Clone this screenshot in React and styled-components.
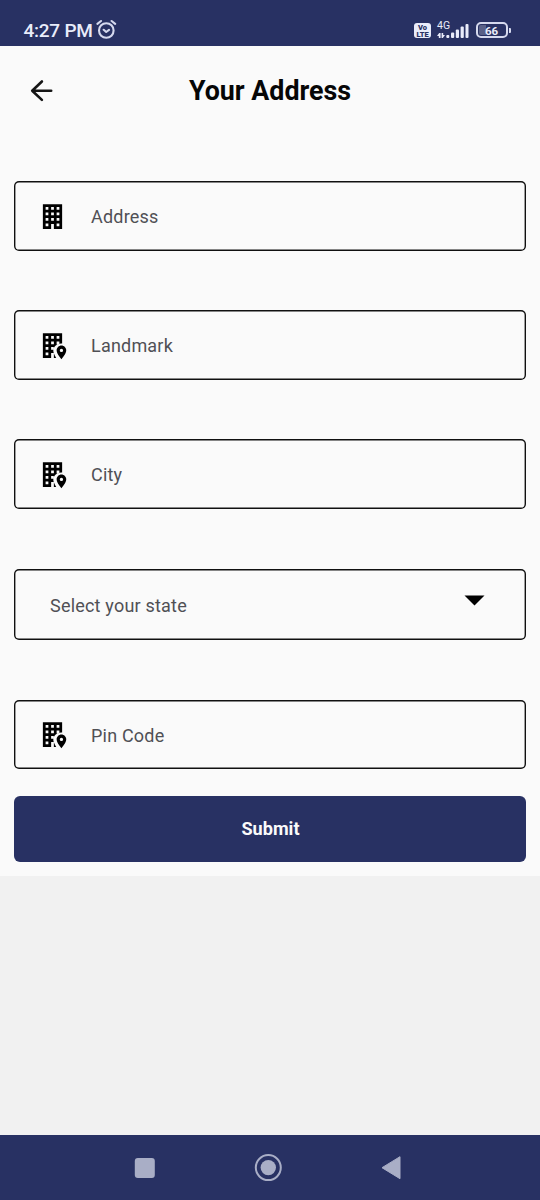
import React from "react";
import styled, { createGlobalStyle } from "styled-components";

const NAVY = "#283163";

const GlobalStyle = createGlobalStyle`
  * { box-sizing: border-box; }
  body { margin: 0; background: #f1f1f1; font-family: Roboto, "Liberation Sans", sans-serif; }
  svg { display: block; flex: none; }
`;

const Screen = styled.div`
  display: flex;
  flex-direction: column;
  width: 540px;
  height: 1200px;
  background: #f1f1f1;
`;

const StatusBar = styled.header`
  display: flex;
  justify-content: space-between;
  height: 46px;
  padding: 0 29.5px 0 23.5px;
  background: ${NAVY};
  color: #e9ecfa;
`;

const Clock = styled.div`
  display: flex;
  gap: 3px;
  padding-top: 19px;
  font-size: 19px;
  font-weight: 500;
  line-height: 24px;
  white-space: nowrap;
`;

const ClockText = styled.span`
  width: 69px;
  letter-spacing: -0.25px;
`;

const StatusIcons = styled.div`
  display: flex;
  padding-top: 19px;
`;

const VolteBadge = styled.div`
  display: flex;
  flex-direction: column;
  align-items: center;
  justify-content: center;
  width: 17px;
  height: 15px;
  margin: 4px 5.5px 0 0;
  border-radius: 3px;
  background: #e9ecfa;
  color: ${NAVY};
  font-size: 7.5px;
  font-weight: 900;
  line-height: 7px;
`;

const BadgeLine = styled.span`
  height: 7px;
`;

const Signal = styled.div`
  width: 33px;
  margin-right: 6px;
`;

const Network = styled.div`
  padding-left: 0.5px;
  font-size: 10.5px;
  line-height: 13px;
  height: 5px;
`;

const Battery = styled.div`
  display: flex;
  align-items: center;
  height: 16px;
  margin-top: 3px;
`;

const BatteryBody = styled.div`
  width: 32px;
  height: 16px;
  border: 2px solid #d5d9ee;
  border-radius: 5px;
  background: linear-gradient(90deg, #596087 0 7px, ${NAVY} 7px);
  background-origin: content-box;
  background-clip: content-box;
  padding: 1px;
  font-size: 11.5px;
  font-weight: 700;
  line-height: 12px;
  text-align: center;
`;

const BatteryTip = styled.div`
  width: 2px;
  height: 5px;
  margin-left: 1px;
  border-radius: 0 1px 1px 0;
  background: #d5d9ee;
`;

const Page = styled.main`
  height: 830px;
  padding: 0 14px;
  background: #fafafa;
`;

const TitleBar = styled.div`
  display: grid;
  grid-template-columns: 60px 1fr 60px;
  align-items: center;
  height: 90px;
  margin-bottom: 45px;
`;

const BackButton = styled.button`
  padding: 0 0 0 15px;
  border: 0;
  background: none;
`;

const Title = styled.h1`
  margin: 0;
  color: #060606;
  font-size: 26.8px;
  font-weight: 700;
  line-height: 32px;
  text-align: center;
  white-space: nowrap;
`;

const Form = styled.form`
  display: flex;
  flex-direction: column;
`;

const Field = styled.label`
  display: flex;
  align-items: center;
  height: ${(p) => p.$height || 70}px;
  margin-bottom: ${(p) => p.$gap || 59}px;
  padding: ${(p) => p.$padding || "0 22px"};
  border-radius: 5px;
  box-shadow: inset 0 0 0 1.4px #101010;
`;

const Placeholder = styled.span`
  flex: 1;
  padding-top: ${(p) => p.$drop || 2}px;
  color: #505055;
  font-size: 18px;
  line-height: 24px;
  letter-spacing: 0.2px;
`;

const FieldIcon = styled.svg`
  width: 33px;
  height: 33px;
  margin-right: 22px;
`;

const SubmitButton = styled.button`
  height: 66px;
  padding: 0 0 0 1px;
  border: 0;
  border-radius: 6px;
  background: ${NAVY};
  color: #fafafa;
  font: 700 18.1px/24px Roboto, sans-serif;
`;

const NavBar = styled.nav`
  display: flex;
  align-items: center;
  justify-content: space-between;
  height: 65px;
  margin-top: auto;
  padding: 0 139px 0 134px;
  background: ${NAVY};
`;

function BuildingIcon() {
  return (
    <FieldIcon viewBox="0 0 24 24">
      <path
        fillRule="evenodd"
        d="M5 3V21H11V17.5H13V21H19V3H5M7 5H9V7H7V5M11 5H13V7H11V5M15 5H17V7H15V5M7 9H9V11H7V9M11 9H13V11H11V9M15 9H17V11H15V9M7 13H9V15H7V13M11 13H13V15H11V13M15 13H17V15H15V13M7 17H9V19H7V17M15 17H17V19H15V17Z"
      />
    </FieldIcon>
  );
}

function BuildingMarkerIcon() {
  return (
    <FieldIcon viewBox="0 0 24 24">
      <path
        fillRule="evenodd"
        d="M5 3V21H11V17.5H12.9C13.3 18.8 14 20 14.7 21H13V17.5H12.9C12.7 16.9 12.6 16.2 12.6 15.6C12.6 12.6 15.4 10.5 18.3 10.5L19 10.6V3H5M7 5H9V7H7V5M11 5H13V7H11V5M15 5H17V7H15V5M7 9H9V11H7V9M11 9H13V11H11V9M15 9H17V10.8L15.6 11.3H15V9M7 13H9V15H7V13M11 13H13V13.3L12.6 15H11V13M7 17H9V19H7V17Z"
      />
      <path
        fillRule="evenodd"
        d="M18.5 12C16.6 12 15 13.6 15 15.5C15 18.1 18.5 22 18.5 22S22 18.1 22 15.5C22 13.6 20.4 12 18.5 12M18.5 16.8A1.2 1.2 0 1 1 18.5 14.4A1.2 1.2 0 0 1 18.5 16.8Z"
      />
    </FieldIcon>
  );
}

export default function App() {
  return (
    <Screen>
      <GlobalStyle />
      <StatusBar>
        <Clock>
          <ClockText>4:27 PM</ClockText>
          <svg width="21" height="21" viewBox="0 0 21 21" fill="none" stroke="#d5d9ee" strokeWidth="2.1" strokeLinecap="round" strokeLinejoin="round">
            <circle cx="10.3" cy="11.5" r="7.3" />
            <path d="M1.4 4.8L5 2M19.2 4.8L15.6 2M7.7 10.8L10.2 13L13 10.9" />
          </svg>
        </Clock>
        <StatusIcons>
          <VolteBadge>
            <BadgeLine>Vo</BadgeLine>
            <BadgeLine>LTE</BadgeLine>
          </VolteBadge>
          <Signal>
            <Network>4G</Network>
            <svg width="33" height="15" viewBox="0 0 33 15" fill="#e9ecfa">
              <path d="M1.8 14V12H0L2.2 9H3.6V14ZM4.6 9H6.2V11H8L5.8 14H4.6Z" />
              <rect x="9.3" y="11" width="3" height="3" rx="1" />
              <rect x="14" y="8.5" width="3.2" height="5.5" rx="1" />
              <rect x="18.8" y="5.5" width="3.2" height="8.5" rx="1" />
              <rect x="23.6" y="2.5" width="3.2" height="11.5" rx="1" />
              <rect x="28.5" y="0" width="3" height="14" rx="1" />
            </svg>
          </Signal>
          <Battery>
            <BatteryBody>66</BatteryBody>
            <BatteryTip />
          </Battery>
        </StatusIcons>
      </StatusBar>
      <Page>
        <TitleBar>
          <BackButton type="button" aria-label="Back">
            <svg width="26" height="24" viewBox="0 0 26 24" fill="none" stroke="#151515" strokeWidth="2.6" strokeLinecap="round" strokeLinejoin="round">
              <path d="M22.2 11.7H3.2M12.9 2.5L3.2 11.7L12.9 20.9" />
            </svg>
          </BackButton>
          <Title>Your Address</Title>
        </TitleBar>
        <Form>
          <Field>
            <BuildingIcon />
            <Placeholder>Address</Placeholder>
          </Field>
          <Field>
            <BuildingMarkerIcon />
            <Placeholder>Landmark</Placeholder>
          </Field>
          <Field $gap={60}>
            <BuildingMarkerIcon />
            <Placeholder>City</Placeholder>
          </Field>
          <Field $height={71} $gap={60} $padding="0 41px 0 36px">
            <Placeholder $drop={3}>Select your state</Placeholder>
            <svg width="21" height="20" viewBox="0 0 21 20">
              <path d="M.5 .5H20.5L10.5 10.5Z" />
            </svg>
          </Field>
          <Field $height={69} $gap={27}>
            <BuildingMarkerIcon />
            <Placeholder $drop={3}>Pin Code</Placeholder>
          </Field>
          <SubmitButton type="button">Submit</SubmitButton>
        </Form>
      </Page>
      <NavBar>
        <svg width="21" height="20" viewBox="0 0 21 20" fill="#a9aec6">
          <rect x=".8" y="0" width="20" height="20" rx="3" />
        </svg>
        <svg width="28" height="28" viewBox="0 0 28 28" fill="#a9aec6">
          <circle cx="14.3" cy="13.6" r="12.5" fill="none" stroke="#a9aec6" strokeWidth="2" />
          <circle cx="14.3" cy="13.6" r="7.7" />
        </svg>
        <svg width="20" height="24" viewBox="0 0 20 24" fill="#a9aec6" stroke="#a9aec6" strokeWidth="1" strokeLinejoin="round">
          <path d="M1 11.7L19 .7V22.7Z" />
        </svg>
      </NavBar>
    </Screen>
  );
}
